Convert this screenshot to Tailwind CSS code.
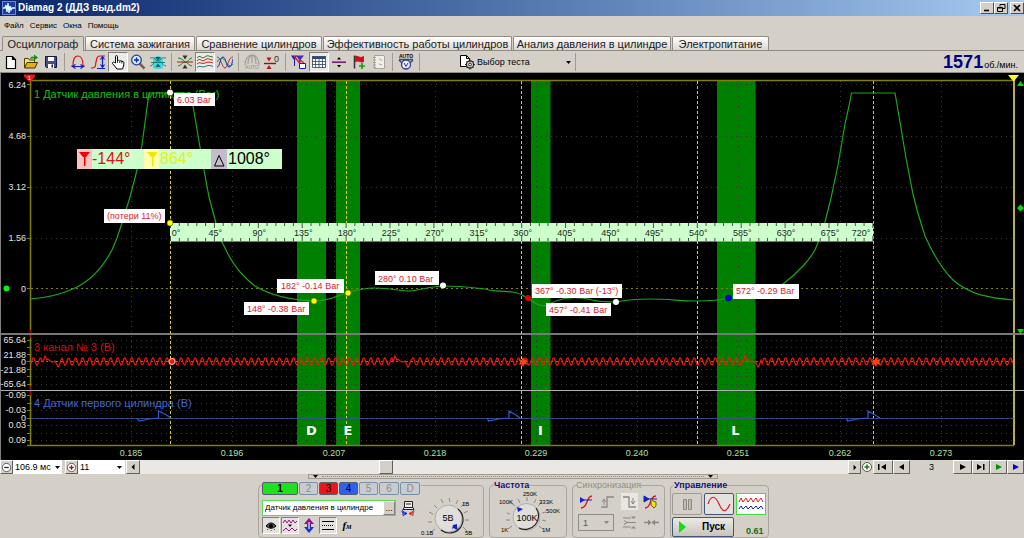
<!DOCTYPE html>
<html lang="ru">
<head>
<meta charset="utf-8">
<meta name="viewport" content="width=device-width, initial-scale=1">
<title>Diamag 2 (ДДЗ выд.dm2)</title>
<script src="https://cdn.jsdelivr.net/npm/@tailwindcss/browser@4"></script>
</head>
<body class="flex min-h-screen flex-col overflow-x-hidden bg-[#d4d0c8] font-['Liberation_Sans',sans-serif] text-[9px] leading-3 text-black">

<!-- Title bar -->
<header class="flex h-4 items-center bg-linear-to-r from-[#0a246a] to-[#a6caf0] pl-0.5">
  <svg class="size-[14px]" viewBox="0 0 14 14"><rect width="14" height="14" fill="#2038a0"/><rect x=".5" y=".5" width="13" height="13" fill="none" stroke="#7088d8"/><path d="M1 7h2l1-3 1 7 1-9 1 10 1-7 1 4 1-2h3" fill="none" stroke="#dff" stroke-width="1.3"/></svg>
  <h1 class="flex-1 pl-0.5 text-[10px] font-bold text-white">Diamag 2 (ДДЗ выд.dm2)</h1>
  <div class="flex">
    <button aria-label="Свернуть" class="h-3 w-[14px] border border-t-white border-r-[#505050] border-b-[#505050] border-l-white bg-[#d4d0c8]"><svg class="block" viewBox="0 0 12 10"><path d="M3 7.5h5" stroke="#000" stroke-width="1.6"/></svg></button>
    <button aria-label="Восстановить" class="h-3 w-[14px] border border-t-white border-r-[#505050] border-b-[#505050] border-l-white bg-[#d4d0c8]"><svg class="block" viewBox="0 0 12 10"><path d="M5 3.500V1.500h5v4H8M2.500 4.500h5v4h-5zM5 1.500h5M2.500 5h5" fill="none" stroke="#000"/></svg></button>
    <button aria-label="Закрыть" class="ml-0.5 h-3 w-[14px] border border-t-white border-r-[#505050] border-b-[#505050] border-l-white bg-[#d4d0c8]"><svg class="block" viewBox="0 0 12 10"><path d="M3 2l6 6M9 2l-6 6" stroke="#000" stroke-width="1.700"/></svg></button>
  </div>
</header>

<!-- Menu -->
<nav class="flex h-5 items-center gap-1.5 pl-1 text-[8px]">
  <button>Файл</button><button>Сервис</button><button>Окна</button><button>Помощь</button>
</nav>

<!-- Tabs -->
<div role="tablist" class="flex h-[15px] items-end gap-px border-b border-[#908c84] pl-0.5 text-[11px] whitespace-nowrap text-[#202020]">
  <button role="tab" aria-selected="true" class="-mb-px h-[15px] w-[82px] rounded-t-xs border border-b-0 border-[#908c84] bg-[#d4d0c8]">Осциллограф</button>
  <button role="tab" class="h-[14px] w-[110px] rounded-t-xs border border-b-0 border-[#908c84] bg-linear-to-b from-white to-[#dcd8d0]">Система зажигания</button>
  <button role="tab" class="h-[14px] w-[126px] rounded-t-xs border border-b-0 border-[#908c84] bg-linear-to-b from-white to-[#dcd8d0]">Сравнение цилиндров</button>
  <button role="tab" class="h-[14px] w-[189px] rounded-t-xs border border-b-0 border-[#908c84] bg-linear-to-b from-white to-[#dcd8d0]">Эффективность работы цилиндров</button>
  <button role="tab" class="h-[14px] w-[158px] rounded-t-xs border border-b-0 border-[#908c84] bg-linear-to-b from-white to-[#dcd8d0]">Анализ давления в цилиндре</button>
  <button role="tab" class="h-[14px] w-[97px] rounded-t-xs border border-b-0 border-[#908c84] bg-linear-to-b from-white to-[#dcd8d0]">Электропитание</button>
</div>

<!-- Toolbar -->
<div role="toolbar" class="flex h-[22px] items-center border-b border-[#908c84] pl-px">
  <button aria-label="Новый" class="size-5 p-0.5"><svg viewBox="0 0 16 16"><path d="M3.500 2.500h6l3 3v9h-9zM9.500 2.500v3h3" fill="#fff" stroke="#000" stroke-width="1.200"/></svg></button>
  <button aria-label="Открыть" class="size-5 p-0.5"><svg viewBox="0 0 16 16"><path d="M1.500 13.500v-9h4l1 1.500h5v3" fill="#ffe060" stroke="#554400"/><path d="M1.500 14L4 8.500h10.500L12 14z" fill="#e0b020" stroke="#443300"/><path d="M7 5c1-3 3-3 4-2V.5l4 3-4 3V4.500c-2 0-2 0-4 .5z" fill="#109010"/></svg></button>
  <button aria-label="Сохранить" class="size-5 p-0.5"><svg viewBox="0 0 16 16"><path d="M2.500 2.500h11v11h-10l-1-1z" fill="#405080" stroke="#101840"/><path d="M5 3h6v4H5zM5 10h6v4H5z" fill="#fff"/><path d="M8.500 10.500h1.500v3H8.500z" fill="#101840"/></svg></button>
  <span class="mx-[3px] h-[18px] w-px bg-[#a09c94]"></span>
  <button aria-label="Ширина" class="size-5 p-0.5"><svg viewBox="0 0 16 16" fill="none"><path d="M1 12h2c0-6 1-10 5-10s5 4 5 10h2" stroke="#e01010" stroke-width="1.200"/><path d="M3.500 12.500h9M5.500 10.500l-3 2 3 2M10.500 10.500l3 2-3 2" stroke="#1020d0" stroke-width="1.200"/></svg></button>
  <button aria-label="Высота" class="size-5 p-0.5"><svg viewBox="0 0 16 16" fill="none"><path d="M1 14c6 0 4-3 5-6s0-6 4-6h5" stroke="#e01010" stroke-width="1.200"/><path d="M7 14.500h8M12.500 3v10M10.500 5.500l2-3 2 3M10.500 10.500l2 3 2-3" stroke="#1020d0" stroke-width="1.200"/></svg></button>
  <button aria-label="Рука" class="size-5 border border-t-[#808080] border-r-white border-b-white border-l-[#808080] bg-[#eceae6] p-px"><svg viewBox="0 0 16 16"><path d="M5.500 9V2.500c0-1.200 2-1.200 2 0V7l1-.7 1.300.9 1.200-.5 1 .9 1-.3.8 1V11l-1.300 4H7L2.500 9.500c-.5-1 1-2 2-1z" fill="#fff" stroke="#000"/><path d="M7.500 7v2M9.700 7.500V9M11.800 7.500V9.500" stroke="#000" stroke-width=".8"/></svg></button>
  <button aria-label="Увеличить" class="size-5 p-0.5"><svg viewBox="0 0 16 16"><path d="M9.500 9.500l5 5" stroke="#806040" stroke-width="2.500"/><circle cx="6.500" cy="6" r="4.800" fill="#d8f0ff" stroke="#204080" stroke-width="1.300"/><path d="M4 6h5M6.500 3.500v5" stroke="#1020d0" stroke-width="1.500"/></svg></button>
  <button aria-label="Пределы" class="size-5 p-0.5"><svg viewBox="0 0 16 16"><path d="M3 5c2-4 8-4 10 0v8c-1 2-2 2-3 2H6c-1 0-2 0-3-2z" fill="#40d8e0"/><path d="M0 4c3 0 3-1 5 1s4 2 6 0 3-1 5-1M0 12c3 0 3-3 5-4h6c2 1 2 4 5 4M1 8.500h14" fill="none" stroke="#208070" stroke-width="1"/><path d="M5 3h6L8 6.500zM5.500 13L8 9.500l2.500 3.500z" fill="#106070"/></svg></button>
  <span class="mx-[3px] h-[18px] w-px bg-[#a09c94]"></span>
  <button aria-label="Синхронный масштаб" class="size-5 p-0.5"><svg viewBox="0 0 16 16" fill="none"><path d="M1 4c3 0 5 2 7 4s4-4 7-4M1 12c3 0 4-4 7-4s4 4 7 4" stroke="#208020"/><path d="M0 8h16" stroke="#a02020"/><path d="M5.500 1.500h5L8 5.500zM5.500 14.500h5L8 10.500z" fill="#303030"/></svg></button>
  <button aria-label="Раздельно" class="size-5 border border-t-[#808080] border-r-white border-b-white border-l-[#808080] bg-[#eceae6] p-px"><svg viewBox="0 0 16 16" fill="none"><path d="M0 4q2-3 4-1t4 0 4-1 4 1" stroke="#208020"/><path d="M0 7q2-3 4-1t4 0 4-1 4 1M0 10q2-2 4-1t4 0 4-1 4 1" stroke="#d02020"/><path d="M0 13.500q2-2 4-1t4 0 4-1 4 1" stroke="#208080"/></svg></button>
  <button aria-label="Совместно" class="size-5 p-0.5"><svg viewBox="0 0 16 16" fill="none"><path d="M0 3C4 3 5 14 8 14S11 3 16 3" stroke="#d02020"/><path d="M0 13C3 13 3 3 6 3s3 10 6 10 3-5 4-8" stroke="#1020d0"/><path d="M0 8c3-5 6-5 9 0s5 4 7 2" stroke="#208060"/></svg></button>
  <span class="mx-[3px] h-[18px] w-px bg-[#a09c94]"></span>
  <button aria-label="Авто ноль" disabled class="size-5 p-0.5"><svg viewBox="0 0 16 16" fill="none" stroke="#a09c94"><path d="M1 11C1 5 4 1 8 1s7 4 7 10M4 10c0-5 2-8 4-9s4 4 4 9M8 1v8" stroke-width="1.200"/><text x="8" y="15" text-anchor="middle" class="fill-[#908c84] stroke-none text-[5px]">AUTO</text></svg></button>
  <button aria-label="Ноль" class="size-5 p-0.5"><svg viewBox="0 0 16 16"><path d="M0 9.500h12" stroke="#702020" stroke-width="1.400"/><path d="M2.500 3.500h5L5 7.500zM2.500 15h5L5 11z" fill="#c01010"/><text x="10" y="8" class="fill-[#333] text-[9px]">0</text></svg></button>
  <span class="mx-[3px] h-[18px] w-px bg-[#a09c94]"></span>
  <button aria-label="Маркеры" class="size-5 p-0.5"><svg viewBox="0 0 16 16"><path d="M0 1.500h6L4 6v6H3V6z" fill="#1020d0"/><path d="M5 1.500h8L9.500 6v5H8V6z" fill="#4030c0"/><path d="M3 2l7 9M8 5l5 4" stroke="#e02020" stroke-width="1.300"/><path d="M8.500 9.500h6v5h-6z" fill="#fff" stroke="#1020d0"/></svg></button>
  <button aria-label="Таблица" class="size-5 border border-t-[#808080] border-r-white border-b-white border-l-[#808080] bg-[#eceae6] p-px"><svg viewBox="0 0 16 16"><path d="M1.500 2.500h13v11h-13z" fill="#fff"/><path d="M1 2h14v3H1z" fill="#304878"/><path d="M1.500 2.500h13v11h-13zM4.500 5v9M8 5v9M11.500 5v9M1 7.500h14M1 10.500h14" fill="none" stroke="#405070" stroke-width=".9"/></svg></button>
  <button aria-label="Разделитель" class="size-5 p-0.5"><svg viewBox="0 0 16 16"><path d="M1 8.200h14" stroke="#802080" stroke-width="1.700"/><path d="M6 5.500h4L8 3zM6 11h4l-2 2.500z" fill="#000"/></svg></button>
  <button aria-label="Флаг" class="size-5 p-0.5"><svg viewBox="0 0 16 16"><path d="M3.500 1.500v13" stroke="#333" stroke-width="1.500"/><path d="M4 2c3-1 4 1 6 1l3-1v6c-3 1-4 0-6-.5L4 8z" fill="#d01020"/><path d="M8 12h6M11 9v6" stroke="#10a020" stroke-width="1.700"/></svg></button>
  <button aria-label="Заметка" disabled class="size-5 p-0.5"><svg viewBox="0 0 16 16"><path d="M3.500 1.500h9l1 1v12h-10z" fill="#f0eeea" stroke="#a8a49c"/><path d="M2 3.500h3M2 6h3M2 8.500h3M2 11h3M2 13.500h3M8 5l3 1.500M8 10l3 1" stroke="#a8a49c"/></svg></button>
  <span class="mx-[3px] h-[18px] w-px bg-[#a09c94]"></span>
  <button aria-label="Авто" class="size-5 p-0.5"><svg viewBox="0 0 16 16"><text x="8" y="4" text-anchor="middle" class="fill-black text-[5px] font-bold">AUTO</text><path d="M1 6l3 3M15 6l-3 3M1 5.500h14" stroke="#405080" stroke-width="1.500"/><circle cx="8" cy="10.500" r="4.500" fill="#e8ecff" stroke="#304080" stroke-width="1.300"/><path d="M6 9l2 3.500L10 9" fill="none" stroke="#5020a0"/></svg></button>
  <span class="mx-[3px] h-[18px] w-px bg-[#a09c94]"></span>
  <div class="relative ml-9 h-5 w-[116px]">
    <svg class="pointer-events-none absolute top-0.5 left-0 h-4 w-4" viewBox="0 0 16 16"><path d="M1.500 1.500h6l3 3v8h-9z" fill="#fff" stroke="#000"/><path d="M7.500 1.500v3h3" fill="none" stroke="#000"/><circle cx="11" cy="10.500" r="3.600" fill="#d4d0c8" stroke="#222" stroke-width="1.200"/><circle cx="11" cy="10.500" r="1.400" fill="#fff" stroke="#222"/><path d="M11 5.500v2M11 13.500v2M6 10.500h2M14 10.500h2M7.500 7l1 1M13.500 13l1 1M14.500 7l-1 1M7.500 14l1-1" stroke="#222"/></svg>
    <select aria-label="Выбор теста" class="h-5 w-full appearance-none bg-transparent pl-[18px]"><option>Выбор теста</option></select>
    <svg class="pointer-events-none absolute top-[9px] right-1 h-[3px] w-[5px]" viewBox="0 0 5 3"><path d="M0 0h5L2.500 3z"/></svg>
  </div>
  <span class="h-[18px] w-px bg-[#a09c94]"></span>
  <output class="ml-auto flex items-baseline pr-1.5"><b class="text-[18px] leading-5 text-[#000080]">1571</b><span class="pl-px">об./мин.</span></output>
</div>

<!-- Oscillogram -->
<main>
<svg class="block w-full bg-black" viewBox="0 73 1024 387" role="img" aria-label="Осциллограмма">
  <g class="fill-[#008000]"><path d="M297 81h29v364h-29zM336 81h24v364h-24zM531 81h19.500v364H531zM717 81h38.500v364H717z"/></g>
  <g id="grid" class="stroke-[#383838]" fill="none" stroke-dasharray="1 4"></g>
  <g class="stroke-[#808010]" stroke-dasharray="2 3"><path d="M31 288.500h983M31 361.500h983M31 418.500h983"/></g>
  <g fill="none"><path d="M.5 73v387" stroke="#808080"/><path d="M30.500 80.500V445.500M30 80.500h984M27 445.500h987" stroke="#808000" stroke-width="1.500"/><path d="M1014 80v365" stroke="#b8b040" stroke-width="2"/><path d="M30.500 330v8M30.500 386v10" stroke="#a00000"/></g>
  <path d="M1 334h1023" stroke="#787878" stroke-width="2"/><path d="M1 390.500h1023" stroke="#b0b0b0"/>
  <g class="text-[11px]"><text x="34" y="98" class="fill-[#10c010]">1 Датчик давления в цилиндре (Bar)</text>
  <text x="34" y="351" class="fill-[#d01010]">3 канал № 3 (В)</text>
  <text x="34" y="407" class="fill-[#4068d0]">4 Датчик первого цилиндра (В)</text></g>
  <path d="M170.500 81v364M346.500 81v364M521.500 81v364M697.500 81v364M873.500 81v364" stroke="#d8d020" stroke-dasharray="3 2"/>
  <path class="stroke-[#18a818]" fill="none" stroke-width="1.200" d="M30 299C45 298 62 294 75 288C90 281 103 267 112 250L117 238L122 223L130 197L137 170L142 145L148 100L149 93H190L193 106L200 147L204 170L209 197L216 223L222 242L226 250C232 263 243 277 255 286C270 295 290 300 314 301C326 301 336 297 346 293C356 290 365 288 375 288C390 288 400 291 410 291C422 290 430 286 445 286C462 286 475 288 485 289C495 292 505 291 513 292C520 293 524 296 529 299C535 303 538 306 544 306C550 304 556 300 565 298.500C575 297 585 298 592 300C600 302 608 302 616 302C630 299 640 299 650 299C670 299 680 301 697 301C710 301 720 300 729 298C745 296 765 291 783 284C798 273 810 259 815 250L819 240L825 222L831 198L838 165L845 124L849 106L851.500 93H895L898 110L906 158L913 194L917 210L925 236C933 254 942 269 953 280C970 295 990 298 1014 300"/>
  <path id="red" class="stroke-[#f01808]" fill="none" stroke-width="1.200"/>
  <path class="stroke-[#3050a0]" d="M31 418.500h983" stroke-width=".8"/>
  <path class="stroke-[#3858d0]" fill="none" stroke-width="1.200" d="M137 418l2 3 10-2 9.500-1v-7l8 4 4 3M487.500 418l1 3 10-2 10.500-1v-7l7 4 4 3M846.500 418l1 3 10-2 10.500-1v-7l7 4 5 3"/>
  <g id="ylab" class="fill-[#e4e4e4] text-[9px]" text-anchor="end"></g>
  <g id="xlab" class="fill-[#a8e0a8] text-[9px]" text-anchor="middle"></g>
  <path d="M170 223h703v18.500H170z" fill="#ccffcc"/>
  <path id="ticks" class="stroke-[#405040]" fill="none"/>
  <g id="deg" class="fill-[#202820] text-[9px]" text-anchor="middle"></g>
  <path d="M77 149h205v20H77z" fill="#ccffcc"/><path d="M77 149h15v20H77z" fill="#ffc0c0"/><path d="M144 149h15v20h-15z" fill="#ffffb0"/><path d="M211 149h16v20h-16z" fill="#c4bccc"/>
  <path d="M79 152h11l-4 5h-3zM84 156h1.500v10H84z" fill="#f00000"/><path d="M147 152h11l-4 5h-3zM152 156h1.500v10H152z" fill="#f0e800"/><path d="M214.500 166l4.500-10.500 5 10.500z" fill="none" stroke="#000"/>
  <g class="text-[16px]"><text x="92" y="164" fill="#e01010">-144°</text><text x="160" y="164" fill="#e4f020">864°</text><text x="228" y="164">1008°</text></g>
  <path fill="#fff" d="M174 93h41v13h-41zM104 209h61v14h-61zM277 279h67v14h-67zM244 302h65v13h-65zM375 271h64v14h-64zM532 284h90v14h-90zM546 303h65v13h-65zM733 284h66v15h-66z"/>
  <g class="fill-[#e01828] text-[9px]"><text x="177" y="103">6.03 Bar</text><text x="107" y="219">(потери 11%)</text><text x="281" y="289">182° -0.14 Bar</text><text x="247" y="312">148° -0.38 Bar</text><text x="378" y="282">280° 0.10 Bar</text><text x="535" y="294">367° -0.30 Bar (-13°)</text><text x="549" y="313">457° -0.41 Bar</text><text x="736" y="294">572° -0.29 Bar</text></g>
  <g fill="#fff"><circle cx="170" cy="92.500" r="3"/><circle cx="443" cy="285.500" r="3"/><circle cx="616" cy="302" r="3"/></g>
  <g fill="#ffff00" stroke="#606000" stroke-width=".6"><circle cx="170" cy="223" r="3"/><circle cx="314" cy="301" r="3"/><circle cx="348" cy="293" r="3"/></g>
  <circle cx="528" cy="298" r="3" fill="#e00000"/><circle cx="728.500" cy="298" r="3" fill="#0000e0" stroke="#000060" stroke-width=".6"/>
  <circle cx="172" cy="361.500" r="3" fill="#e02010" stroke="#f8c8b0"/><path d="M523 357l1.500 3 3.500-1-2 3 2 3-3.500-1-1.500 3-1.500-3-3 1 2-3-2-3 3 1zM876 357l1.500 3 3.500-1-2 3 2 3-3.500-1-1.500 3-1.500-3-3 1 2-3-2-3 3 1z" fill="#ff4010"/>
  <path d="M24 74.500h11v2l-4 5h-2l-5-5z" fill="#e81818"/><text x="29.500" y="80" text-anchor="middle" fill="#fff" class="text-[6px]">1</text>
  <path d="M1008 75h11l-5 6h-1z" fill="#ffff20"/>
  <path d="M1017 86l3.500-5 3.500 5zM1017 329h7l-3.500 5zM1017 208l3.500-3.500 3.500 3.500-3.500 3.500z" fill="#00e000"/><circle cx="6.500" cy="288.500" r="3" fill="#10f010"/>
  <g class="fill-white font-['DejaVu_Sans'] text-[13px] font-bold" text-anchor="middle"><text x="311.500" y="435">D</text><text x="348" y="435">E</text><text x="540.500" y="435">I</text><text x="735.500" y="435">L</text></g>
</svg>
</main>

<!-- Timeline navigation -->
<div class="flex h-[14px] items-stretch">
  <button aria-label="Сжать" class="w-[13px] border border-t-white border-r-[#606060] border-b-[#606060] border-l-white"><svg viewBox="0 0 12 12"><circle cx="6" cy="6" r="4.500" fill="#fff" stroke="#555"/><path d="M3.500 6h5" stroke="#202080" stroke-width="1.400"/></svg></button>
  <div class="relative mr-[3px] w-[49px] bg-white"><select aria-label="Развёртка" class="h-[14px] w-full appearance-none bg-transparent pl-0.5"><option>106.9 мс</option></select><svg class="pointer-events-none absolute top-1.5 right-[2px] h-[3px] w-[5px]" viewBox="0 0 5 3"><path d="M0 0h5L2.500 3z"/></svg></div>
  <button aria-label="Растянуть" class="w-[13px] border border-t-white border-r-[#606060] border-b-[#606060] border-l-white"><svg viewBox="0 0 12 12"><circle cx="6" cy="6" r="4.500" fill="#fff" stroke="#555"/><path d="M3.500 6h5M6 3.500v5" stroke="#b01010" stroke-width="1.500"/></svg></button>
  <div class="relative mr-px w-[47px] bg-white"><select aria-label="Масштаб" class="h-[14px] w-full appearance-none bg-transparent pl-0.5"><option>11</option></select><svg class="pointer-events-none absolute top-1.5 right-[3px] h-[3px] w-[5px]" viewBox="0 0 5 3"><path d="M0 0h5L2.500 3z"/></svg></div>
  <button aria-label="Влево" class="w-[14px] border border-t-white border-r-[#606060] border-b-[#606060] border-l-white"><svg viewBox="0 0 12 12"><path d="M7.500 3v6l-3-3z"/></svg></button>
  <input type="range" aria-label="Положение" min="0" max="1000" value="345" class="h-[14px] min-w-0 flex-1 appearance-none bg-[#eae8e4] [&::-webkit-slider-thumb]:h-[14px] [&::-webkit-slider-thumb]:w-[14px] [&::-webkit-slider-thumb]:appearance-none [&::-webkit-slider-thumb]:border [&::-webkit-slider-thumb]:border-t-white [&::-webkit-slider-thumb]:border-r-[#606060] [&::-webkit-slider-thumb]:border-b-[#606060] [&::-webkit-slider-thumb]:border-l-white [&::-webkit-slider-thumb]:bg-[#d4d0c8]">
  <button aria-label="Вправо" class="w-[13px] border border-t-white border-r-[#606060] border-b-[#606060] border-l-white"><svg viewBox="0 0 12 12"><path d="M5 3v6l3-3z"/></svg></button>
  <button aria-label="Добавить" class="w-3"><svg viewBox="0 0 12 12"><circle cx="6" cy="6" r="4.500" fill="#fff" stroke="#555"/><path d="M3.500 6h5M6 3.500v5" stroke="#108010" stroke-width="1.500"/></svg></button>
  <button aria-label="В начало" class="w-5 border border-t-white border-r-[#606060] border-b-[#606060] border-l-white"><svg viewBox="0 0 18 12"><path d="M4 3h1.500v6H4zM12 3v6L7 6z"/></svg></button>
  <button aria-label="Назад" class="w-[17px] border border-t-white border-r-[#606060] border-b-[#606060] border-l-white"><svg viewBox="0 0 15 12"><path d="M10 3v6L5 6z"/></svg></button>
  <output class="w-[43px] pt-px text-center">3</output>
  <button aria-label="Вперёд" class="w-[19px] border border-t-white border-r-[#606060] border-b-[#606060] border-l-white"><svg viewBox="0 0 17 12"><path d="M6 3v6l6-3z"/></svg></button>
  <button aria-label="В конец" class="w-[18px] border border-t-white border-r-[#606060] border-b-[#606060] border-l-white"><svg viewBox="0 0 16 12"><path d="M4 3v6l5-3zM10 3h1.500v6H10z"/></svg></button>
  <button aria-label="Воспроизвести" class="w-[17px] border border-t-white border-r-[#606060] border-b-[#606060] border-l-white"><svg viewBox="0 0 15 12"><path d="M5 3v6l6-3z" fill="#089008"/></svg></button>
  <button aria-label="Воспроизвести далее" class="w-[17px] border border-t-white border-r-[#606060] border-b-[#606060] border-l-white"><svg viewBox="0 0 15 12"><path d="M5 3v6l6-3z" fill="#0000e0"/></svg></button>
</div>

<!-- Splitter -->
<div class="flex h-1.5 justify-center pl-0.5">
  <div class="flex h-[5px] w-[410px] items-center justify-between border border-[#a09c94] px-1">
    <svg class="h-[3px] w-[5px]" viewBox="0 0 5 3"><path d="M0 0h5L2.500 3z"/></svg>
    <span class="mx-1 flex-1 border-t border-dotted border-[#908c84]"></span>
    <svg class="h-[3px] w-[5px]" viewBox="0 0 5 3"><path d="M0 0h5L2.500 3z"/></svg>
  </div>
</div>

<!-- Control panels -->
<footer class="flex flex-1 items-start justify-center gap-[5px] pl-[3px]">
  <section class="h-[58px] w-[226px] pt-[5px]">
    <div class="flex h-[53px] rounded-sm border border-[#aaa69e] pl-[3px]">
      <div class="-mt-1 w-[159px]">
        <div class="flex gap-px bg-[#d4d0c8] text-[10px] text-[#908c84]">
          <button class="h-[13px] w-9 rounded-xs border border-[#506070] bg-[#20e020] leading-[11px] font-bold text-black">1</button>
          <button class="h-[13px] w-[19px] rounded-xs border border-[#7890a8] bg-[#c8ccd0] leading-[11px]">2</button>
          <button class="h-[13px] w-[19px] rounded-xs border border-[#506070] bg-[#e81818] leading-[11px] text-black">3</button>
          <button class="h-[13px] w-[19px] rounded-xs border border-[#506070] bg-[#3060f0] leading-[11px] text-black">4</button>
          <button class="h-[13px] w-[19px] rounded-xs border border-[#7890a8] bg-[#c8ccd0] leading-[11px]">5</button>
          <button class="h-[13px] w-[20px] rounded-xs border border-[#7890a8] bg-[#c8ccd0] leading-[11px]">6</button>
          <button class="h-[13px] w-[20px] rounded-xs border border-[#7890a8] bg-[#c8ccd0] leading-[11px]">D</button>
        </div>
        <div class="flex items-center gap-1 pt-[5px]">
          <div class="flex h-4 w-[134px] border border-[#50e050] bg-white">
            <input aria-label="Датчик" value="Датчик давления в цилиндре" class="min-w-0 flex-1 bg-white pl-0.5 text-[8px]">
            <button aria-label="Выбрать датчик" class="w-3 border border-t-white border-r-[#808080] border-b-[#808080] border-l-white bg-[#d4d0c8] leading-[8px]">...</button>
          </div>
          <button aria-label="Подключение"><svg class="size-4" viewBox="0 0 16 16"><path d="M4.500 1.500h8v6h-8zM3 9.500h11l-1-2H4z" fill="#eee" stroke="#222"/><path d="M6 4h5" stroke="#222"/><path d="M7 13.500C2 14 1 11 3 10M3 11.500l4 2-4 2z" fill="none" stroke="#1020d0"/><path d="M9 13.500c5 .5 6-2.500 4-3.500M13 11.500l-4 2 4 2z" fill="none" stroke="#e02020"/></svg></button>
        </div>
        <div class="flex gap-px pt-px">
          <button aria-label="Видимость" class="h-[17px] w-[18px] border border-t-[#808080] border-r-white border-b-white border-l-[#808080] bg-[#e4e2de]"><svg viewBox="0 0 16 15"><path d="M3 8c3-4 7-4 10 0-3 3-7 3-10 0z" fill="#555" stroke="#000"/><circle cx="8" cy="8" r="2"/><path d="M5 11l-1 1M8 12v1M11 11l1 1" stroke="#555"/></svg></button>
          <button aria-label="Фильтр" class="h-[17px] w-[18px] border border-t-[#808080] border-r-white border-b-white border-l-[#808080] bg-[#e4e2de]"><svg viewBox="0 0 16 15" fill="none" stroke="#a01080"><path d="M1 5l2-3 2 3 2-3 2 3 2-3 2 3 2-2M1 13l3-3 3 3 3-3 3 3 2-2"/><path d="M6 6.500h4L8 9z" fill="#000" stroke="none"/></svg></button>
          <button aria-label="Инверсия" class="h-[17px] w-[18px]"><svg viewBox="0 0 18 17"><path d="M9 1l5 6h-3v2H7V7H4z" fill="#901090"/><path d="M9 16l5-6h-3V8H7v2H4z" fill="#1030e0"/><path d="M8.300 5h1.400v7H8.300z" fill="#d4d0c8"/></svg></button>
          <button aria-label="Линии" class="h-[17px] w-[18px] border border-t-[#808080] border-r-white border-b-white border-l-[#808080] bg-[#e4e2de]"><svg viewBox="0 0 16 15" stroke="#000"><path d="M2 3.500h12M2 11.500h12"/><path d="M2 7.500h12" stroke-dasharray="1 1"/></svg></button>
          <button class="h-[17px] w-[18px] font-['Liberation_Serif',serif] text-[11px] font-bold italic">f<span class="text-[8px]">м</span></button>
        </div>
      </div>
      <svg class="h-[51px] w-[60px]" viewBox="0 0 60 51" role="img" aria-label="Предел 5В">
        <g stroke="#777" stroke-width=".8"><path d="M14 43l-4 3M11 36H7M12 28l-4-2M16 22l-3-3M22 17l-2-4M29 16l-1-4M35 18l2-4M40 21l4-5M43 27l4-2M44 34h4M42 41l4 4"/></g>
        <circle cx="27.500" cy="32.500" r="13.500" fill="#e0deda" stroke="#aaa"/><path d="M37 23a13.500 13.500 0 0 1-17 21" fill="none" stroke="#222" stroke-width="1.200"/>
        <path d="M32 39l4-1v3l1 3-3-1-1-1-2 1z" fill="#1020d0"/><text x="27" y="35" text-anchor="middle" class="text-[9px]">5В</text>
        <g class="text-[6px]"><text x="41" y="20">1В</text><text x="0" y="49">0.1В</text><text x="44" y="49">5В</text></g>
      </svg>
    </div>
  </section>

  <section class="h-[58px] w-[78px] pt-[5px]">
    <div class="h-[53px] rounded-sm border border-[#aaa69e]">
      <h2 class="ml-1 -mt-1.5 h-[9px] w-min bg-[#d4d0c8] text-[9px] leading-[10px] font-bold text-[#101080]">Частота</h2>
      <svg class="h-[46px] w-[76px]" viewBox="0 0 76 46" role="img" aria-label="Частота 100K">
        <g stroke="#777" stroke-width=".8"><path d="M22 37l-4 3M20 31h-4M20 25l-3-1M25 17l-5-4M30 14l-2-4M37 12V8M44 14l2-4M48 17l4-4M52 24l4-1M52 31l4 1M49 37l4 3"/></g>
        <circle cx="36.500" cy="28" r="13.500" fill="#e0deda" stroke="#aaa"/><path d="M46 19a13.500 13.500 0 0 1-17 20" fill="none" stroke="#222" stroke-width="1.200"/>
        <path d="M27 18l6 2-5 3z" fill="#1020d0"/><text x="37" y="32" text-anchor="middle" class="text-[9px]">100K</text>
        <g class="text-[6px]"><text x="33" y="7">250K</text><text x="9" y="15">100K</text><text x="49" y="15">333K</text><text x="56" y="24">500K</text><text x="11" y="43">1K</text><text x="52" y="43">1M</text></g>
      </svg>
    </div>
  </section>

  <section class="h-[58px] w-[93px] pt-[5px]">
    <div class="h-[53px] rounded-sm border border-[#aaa69e] px-[5px]">
      <h2 class="-ml-0.5 -mt-1.5 h-[9px] w-min bg-[#d4d0c8] text-[9px] leading-[10px] text-[#908c84]">Синхронизация</h2>
      <div class="flex justify-between pt-1 pb-1">
        <button aria-label="Уровень"><svg class="size-[17px]" viewBox="0 0 17 17" fill="none"><path d="M3 15c7 0 5-12 11-12" stroke="#e01010" stroke-width="1.300"/><path d="M3 7h11" stroke="#1020d0"/><path d="M2 4l5 3-5 3z" fill="#1020d0"/></svg></button>
        <button aria-label="Фронт" disabled><svg class="size-[17px]" viewBox="0 0 17 17" fill="none" stroke="#8c8880"><path d="M2 14h6V4h7" stroke-width="1.300"/><path d="M5 12V7M3 9l2-3 2 3"/></svg></button>
        <button aria-label="Спад" disabled class="bg-[#e8e6e2]"><svg class="size-[17px]" viewBox="0 0 17 17" fill="none" stroke="#8c8880"><path d="M2 4h6v10h7" stroke-width="1.300"/><path d="M12 5v6M10 8l2 3 2-3"/></svg></button>
        <button aria-label="Ручной уровень"><svg class="size-[17px]" viewBox="0 0 17 17" fill="none"><path d="M3 15c7 0 4-12 11-12" stroke="#e01010" stroke-width="1.300"/><path d="M2 3l5 3-5 3zM3 6h12" fill="#1020d0" stroke="#1020d0"/><path d="M9 5l2 3 3 1v4l-2 2-3-3z" fill="#f0e020" stroke="#504000" stroke-width=".8"/></svg></button>
      </div>
      <div class="flex items-center justify-between">
        <div class="relative h-[17px] w-9 border border-[#908c84]"><select aria-label="Канал синхронизации" disabled class="h-full w-full appearance-none pl-1 text-[#555]"><option>1</option></select><svg class="pointer-events-none absolute top-1.5 right-1 h-[3px] w-[5px]" viewBox="0 0 5 3"><path d="M0 0h5L2.500 3z" fill="#888"/></svg></div>
        <svg class="size-[15px]" viewBox="0 0 15 15" fill="none" stroke="#8c8880"><path d="M1 3h8M4 7.500h10M1 12h8M2 5.500l3 2-3 2"/><path d="M9 1.500h5L11.500 4zM9 13.500h5L11.500 11z" fill="#8c8880" stroke="none"/></svg>
        <svg class="size-[15px]" viewBox="0 0 15 15"><path d="M0 7.500h5M10 7.500h5" stroke="#8c8880" stroke-width="1.500"/><path d="M4 4.500l3.500 3-3.500 3zM11 4.500l-3.500 3 3.500 3z" fill="#8c8880"/></svg>
      </div>
    </div>
  </section>

  <section class="h-[58px] w-[99px] pt-[5px]">
    <div class="h-[53px] rounded-sm border border-[#aaa69e] px-px">
      <h2 class="ml-0.5 -mt-1.5 h-[9px] w-min bg-[#d4d0c8] text-[9px] leading-[10px] font-bold text-[#101080]">Управление</h2>
      <div class="flex gap-0.5 pt-1">
        <button aria-label="Пауза" disabled class="h-[22px] w-[30px] rounded-xs border border-[#a09c94]"><svg viewBox="0 0 28 20"><path d="M10.500 5.500h3v10h-3zM15.500 5.500h3v10h-3z" fill="#c0bcb4" stroke="#8c8880"/></svg></button>
        <button aria-label="Синус" class="h-[22px] w-[30px] rounded-xs border border-[#405878] bg-[#e4e2de]"><svg viewBox="0 0 28 20"><path d="M3 10c3-9 7-9 11 0s7 9 11 0" fill="none" stroke="#e01818" stroke-width="1.200"/></svg></button>
        <button aria-label="Запись" class="h-[22px] w-[30px] border border-[#40e040] bg-white"><svg viewBox="0 0 28 20" fill="none"><path d="M2 8l2-4 2 4 3-4 2 4 3-4 2 4 3-4 2 4 3-4 2 4" stroke="#e01818"/><path d="M2 15l2-3 2 3 3-3 2 3 3-3 2 3 3-3 2 3 3-3 2 3" stroke="#1020e0"/></svg></button>
      </div>
      <div class="flex items-end gap-3 pt-0.5">
        <button class="flex h-[20px] w-[62px] items-center rounded-xs border border-[#405878] bg-linear-to-b from-[#eceae6] to-[#c8c4bc] pl-1.5 text-[10px] font-bold"><svg class="mr-4 h-3 w-[7px]" viewBox="0 0 7 12"><path d="M0 0l7 6-7 6z" fill="#10e010"/></svg>Пуск</button>
        <output class="text-[9px] font-bold text-[#107010]">0.61</output>
      </div>
    </div>
  </section>
</footer>

<script>
const el = id => document.getElementById(id);

// Dotted grid lines: time divisions and value divisions of each channel
const xs = [131, 232, 334, 435, 536, 637, 738, 840, 941];
const ys = [84, 136, 187, 238, 340, 347, 354, 369, 376, 384, 395, 403, 410, 425, 433, 440];
el('grid').innerHTML = '<path d="' + xs.map(x => `M${x}.5 81V445`).join('') + ys.map(y => `M31 ${y}.5H1014`).join('') + '"/>'
  + '<path stroke="#808000" stroke-dasharray="none" d="' + [...ys, 288, 361, 418].map(y => `M27 ${y}.5H30`).join('') + '"/>';

// Axis labels
el('ylab').innerHTML = [['6.24', 88], ['4.68', 139], ['3.12', 190], ['1.56', 241], ['0', 292], ['65.64', 343], ['21.88', 358], ['0', 365], ['-21.88', 373], ['-65.64', 387], ['-0.09', 398], ['-0.03', 413], ['0', 421], ['0.03', 428], ['0.09', 443]]
  .map(([t, y]) => `<text x="26" y="${y}">${t}</text>`).join('');
el('xlab').innerHTML = xs.map((x, i) => `<text x="${x}" y="456">0.${185 + i * 11}</text>`).join('');

// Channel 3 ripple with an ignition disturbance once per cycle
let d = 'M31 362';
for (let x = 31; x < 1014; x++) {
  let y = 361.5 + 3.7 * Math.sin(x * 2 * Math.PI / 7.03);
  for (const s of [43, 393, 743]) {
    const t = x - s;
    if (t >= 0 && t <= 18) y = [362, 359, 356, 358, 360, 359, 360, 361, 361, 362, 362, 362, 361, 363, 365, 367, 366, 363, 360][t];
  }
  d += `L${x} ${y.toFixed(1)}`;
}
el('red').setAttribute('d', d);

// Crank angle ruler
let ticks = '', deg = '';
for (let i = 0; i <= 80; i++) {
  const x = (170.5 + i * 8.78).toFixed(1), n = i % 5 ? 3 : 5;
  ticks += `M${x} 223v${n}M${x} 241v-${n}`;
  if (i % 5 === 0) deg += `<text x="${i === 0 ? 176 : i === 80 ? 861 : +x + 1}" y="236">${i * 9}°</text>`;
}
el('ticks').setAttribute('d', ticks);
el('deg').innerHTML = deg;
</script>
</body>
</html>
